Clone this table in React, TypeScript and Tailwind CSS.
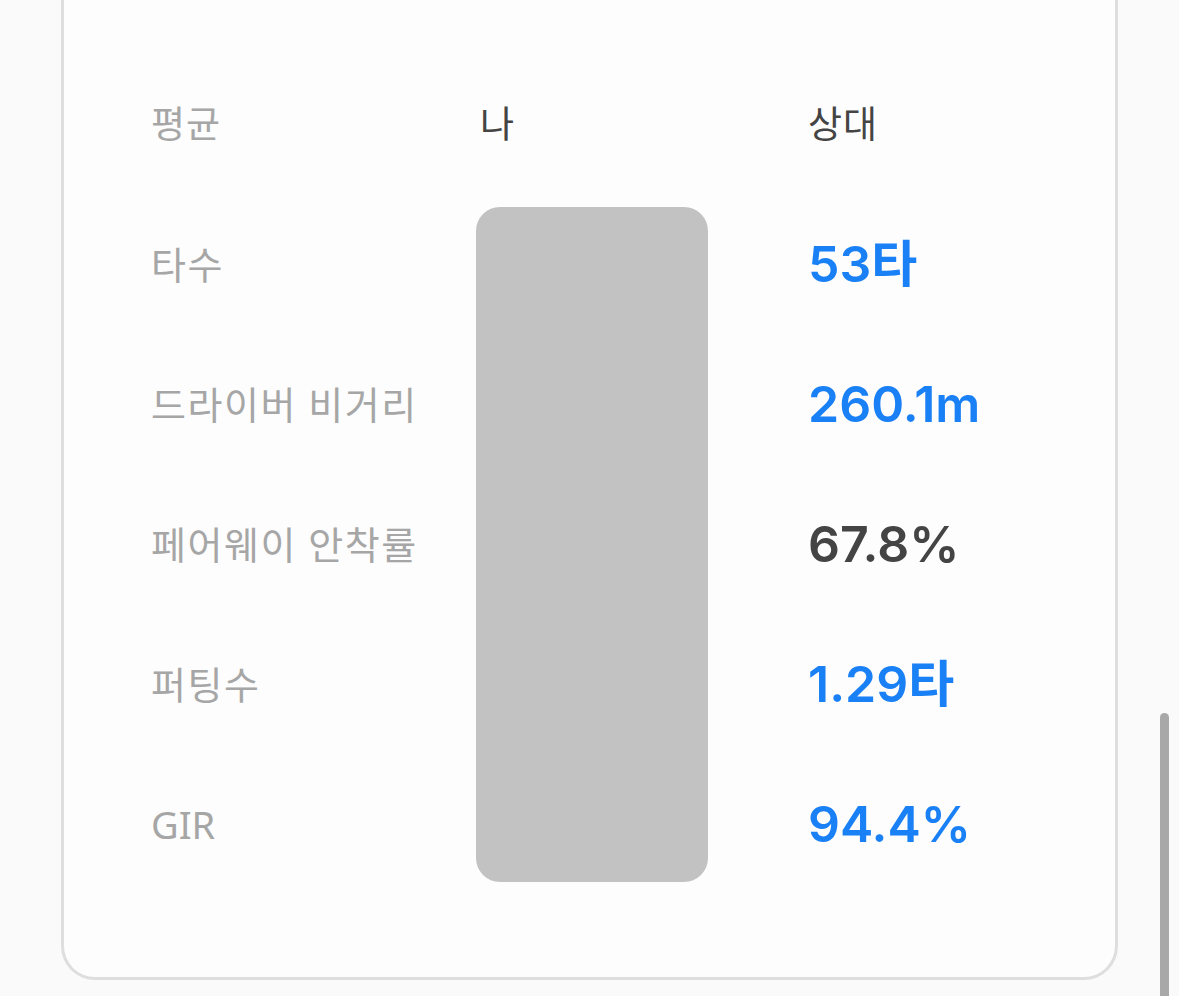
import React from "react";

const rows: { label: string; value: string; blue: boolean }[] = [
  { label: "타수", value: "53타", blue: true },
  { label: "드라이버 비거리", value: "260.1m", blue: true },
  { label: "페어웨이 안착률", value: "67.8%", blue: false },
  { label: "퍼팅수", value: "1.29타", blue: true },
  { label: "GIR", value: "94.4%", blue: true },
];

export default function App() {
  return (
    <div
      className="relative h-[996px] w-[1179px] overflow-hidden bg-[#fafafa]"
      style={{ fontFamily: '"Noto Sans", "Noto Sans CJK KR", sans-serif' }}
    >
      <div className="ml-[61px] w-[1057px] rounded-b-[34px] border-[3px] border-t-0 border-[#dedede] bg-[#fdfdfd] pb-[83px] pl-[87px] pt-[54px]">
        <div className="grid grid-cols-[325px_232px_100px_1fr] grid-rows-[repeat(6,140px)]">
          <div className="col-start-1 row-start-1 flex items-center text-[37px] tracking-[1px] text-[#a6a6a6]">평균</div>
          <div className="col-start-2 row-start-1 flex items-center pl-[4px] text-[37px] text-[#444444]">나</div>
          <div className="col-start-4 row-start-1 flex items-center text-[37px] tracking-[1px] text-[#444444]">상대</div>
          <div className="col-start-2 row-start-2 row-end-7 mb-[12px] mt-[13px] rounded-[24px] bg-[#c2c2c2]" />
          {rows.map((r, i) => (
            <React.Fragment key={r.label}>
              <div
                className={
                  "col-start-1 flex items-center text-[38px] text-[#a6a6a6] " +
                  (r.label === "GIR" ? "tracking-[0px]" : "tracking-[1.5px]")
                }
                style={{ gridRowStart: i + 2 }}
              >
                {r.label}
              </div>
              <div
                className={
                  "col-start-4 flex items-center text-[50px] font-semibold " +
                  (r.blue ? "text-[#1a80f5]" : "text-[#444444]")
                }
                style={{ gridRowStart: i + 2, fontFamily: 'Inter, "Noto Sans CJK KR", sans-serif' }}
              >
                {r.value}
              </div>
            </React.Fragment>
          ))}
        </div>
      </div>
      <div className="absolute left-[1160px] top-[713px] h-[300px] w-[9px] rounded-t-full bg-[#a8a8a8]" />
    </div>
  );
}
